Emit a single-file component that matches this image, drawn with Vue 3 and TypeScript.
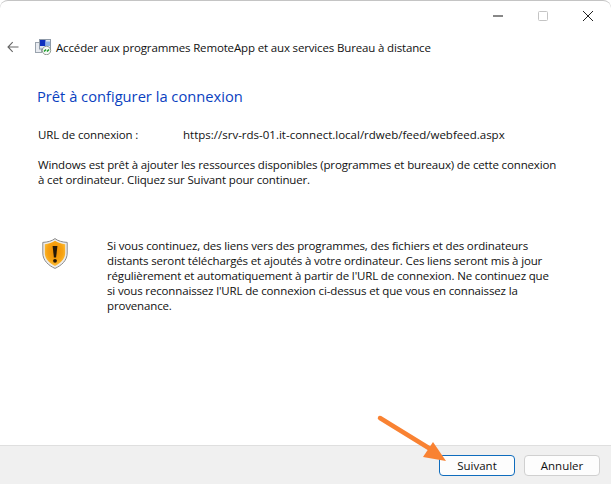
<script setup lang="ts">
const title: string = "Accéder aux programmes RemoteApp et aux services Bureau à distance";
</script>

<template>
  <div class="window">
    <div class="caption">
      <svg class="cap-icon" viewBox="0 0 10 10"><path d="M0 5H10" stroke="#111" stroke-width="1" /></svg>
      <svg class="cap-icon" viewBox="0 0 10 10"><rect x="0.5" y="0.5" width="9" height="9" rx="1" fill="none" stroke="#c4c4c4" /></svg>
      <svg class="cap-icon" viewBox="0 0 10 10"><path d="M0 0L10 10M10 0L0 10" stroke="#222" stroke-width="1" /></svg>
    </div>
    <div class="titlebar">
      <svg class="back" viewBox="0 0 12 12"><path d="M11.5 6H1M5.7 1.2L1 6l4.700 4.800" fill="none" stroke="#666" stroke-width="1.100" /></svg>
      <svg class="app" viewBox="0 0 17 16">
        <rect x="0.500" y="3.500" width="6" height="10" fill="#e8ebf0" stroke="#9aa3ae" stroke-width="1" />
        <rect x="4.500" y="0.500" width="11" height="9.500" fill="#dfe6f0" stroke="#8f9aa8" stroke-width="1" />
        <rect x="5" y="1" width="5.500" height="6" fill="#0d2fbf" />
        <rect x="10.500" y="2.500" width="4.500" height="4.500" fill="#8fb2e6" />
        <circle cx="11.500" cy="11.500" r="4.200" fill="#f6f8f6" stroke="#7a857a" stroke-width="0.800" />
        <path d="M9 12.500l2-2M14 10.500l-2 2" stroke="#1d9a2a" stroke-width="1.500" />
      </svg>
      <span class="title">{{ title }}</span>
    </div>
    <main class="content">
      <h1>Prêt à configurer la connexion</h1>
      <div class="url-row">
        <span class="url-label">URL de connexion :</span>
        <span class="url">https://srv-rds-01.it-connect.local/rdweb/feed/webfeed.aspx</span>
      </div>
      <p class="intro">Windows est prêt à ajouter les ressources disponibles (programmes et bureaux) de cette connexion<br />à cet ordinateur. Cliquez sur Suivant pour continuer.</p>
      <div class="warning">
        <svg class="shield" viewBox="0 0 26 31">
          <defs>
            <radialGradient id="sh" cx="0.5" cy="0.42" r="0.7">
              <stop offset="0" stop-color="#ee8a00" />
              <stop offset="0.55" stop-color="#f7a313" />
              <stop offset="1" stop-color="#ffcf55" />
            </radialGradient>
          </defs>
          <path d="M13 .6C10 3 5.500 4.200 .8 4.400V15C.8 22.500 6.500 27.500 13 30.400 19.500 27.500 25.200 22.500 25.200 15V4.400C20.500 4.200 16 3 13 .6Z" fill="#ececec" stroke="#8a8a8a" stroke-width="1" />
          <path d="M13 2.800C10.200 4.700 6.700 5.800 2.800 6.200V15C2.800 21 7.500 25.300 13 28 18.500 25.300 23.200 21 23.200 15V6.200C19.300 5.800 15.800 4.700 13 2.800Z" fill="url(#sh)" />
          <path d="M10.600 8H15.400L14.100 19.500H11.900Z" fill="#241708" />
          <circle cx="13" cy="22.800" r="1.900" fill="#241708" />
        </svg>
        <p>Si vous continuez, des liens vers des programmes, des fichiers et des ordinateurs<br />distants seront téléchargés et ajoutés à votre ordinateur. Ces liens seront mis à jour<br />régulièrement et automatiquement à partir de l'URL de connexion. Ne continuez que<br />si vous reconnaissez l'URL de connexion ci-dessus et que vous en connaissez la<br />provenance.</p>
      </div>
    </main>
    <footer class="footer">
      <button class="btn primary">Suivant</button>
      <button class="btn">Annuler</button>
    </footer>
    <svg class="arrow" viewBox="0 0 611 484">
      <path d="M380 418L432 450" stroke="#f98232" stroke-width="4.500" stroke-linecap="round" />
      <path d="M433 442L446 461L423 457Z" fill="#f98232" />
    </svg>
  </div>
</template>

<style>
html, body { margin: 0; background: #fff; }
</style>

<style scoped>
.window {
  position: relative;
  width: 611px;
  height: 484px;
  box-sizing: border-box;
  display: flex;
  flex-direction: column;
  overflow: hidden;
  background: #fff;
  border-top: 1px solid #c4c4c4;
  border-radius: 8px 8px 0 0;
  font-family: "Open Sans", "Noto Sans", sans-serif;
  font-size: 11.500px;
  letter-spacing: -0.15px;
  color: #111;
}
.caption {
  display: flex;
  justify-content: flex-end;
  align-items: center;
  gap: 35px;
  height: 30px;
  padding-right: 18px;
}
.cap-icon { width: 10px; height: 10px; }
.titlebar {
  display: flex;
  align-items: center;
  height: 32px;
  padding-left: 7px;
}
.back { width: 12px; height: 12px; margin-right: 16px; }
.app { width: 17px; height: 16px; margin-right: 4px; }
.content { flex: 1; padding: 23px 30px 0 38px; }
h1 {
  margin: 0 0 0 -1px;
  font-size: 14.700px;
  letter-spacing: 0;
  line-height: 20px;
  font-weight: 400;
  color: #0a3fbf;
}
.url-row { display: flex; margin-top: 21px; line-height: 15px; }
.url-label { width: 145px; }
.url { letter-spacing: 0; }
.intro { margin: 15px 0 0; line-height: 15px; }
.warning { display: flex; align-items: flex-start; margin-top: 51px; }
.shield { width: 26px; height: 31px; margin: 0 39px 0 4px; flex: none; }
.warning p { margin: 0; line-height: 15px; }
.footer {
  display: flex;
  justify-content: flex-end;
  align-items: center;
  gap: 9px;
  height: 38px;
  padding: 0 11px 0 0;
  background: #f0f0f0;
  border-top: 1px solid #dfdfdf;
}
.btn {
  width: 76px;
  height: 21px;
  padding: 0;
  box-sizing: border-box;
  background: #fdfdfd;
  border: 1px solid #d0d0d0;
  border-radius: 4px;
  font: inherit;
  letter-spacing: 0;
  color: #111;
}
.primary { border-color: #0f6cbd; }
.arrow {
  position: absolute;
  left: 0;
  top: -1px;
  width: 611px;
  height: 484px;
  pointer-events: none;
}
</style>
